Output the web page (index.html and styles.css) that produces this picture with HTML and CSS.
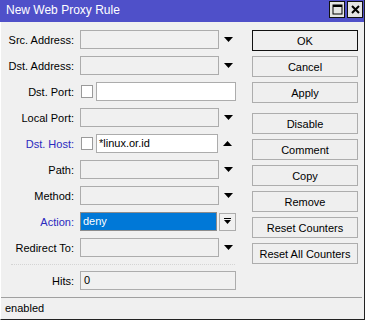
FILE: index.html
```html
<!DOCTYPE html>
<html lang="en">
<head>
    <meta charset="UTF-8">
    <title>New Web Proxy Rule</title>
    <link rel="stylesheet" href="styles.css">
</head>
<body>

    <div class="window">
        <div class="titlebar">
            <span class="title">New Web Proxy Rule</span>
            <div class="title-buttons">
                <span class="tbtn">
                    <svg width="11" height="11" viewBox="0 0 11 11"><rect x="1" y="1" width="9" height="9" fill="none" stroke="#000" stroke-width="1"/><rect x="1" y="1" width="9" height="2" fill="#000"/></svg>
                </span>
                <span class="tbtn">
                    <svg width="9" height="9" viewBox="0 0 9 9"><path d="M1 1 L8 8 M8 1 L1 8" stroke="#000" stroke-width="2"/></svg>
                </span>
            </div>
        </div>

        <div class="main">
            <div class="form">
                <div class="row">
                    <label class="lbl">Src. Address:</label>
                    <span class="field"></span>
                    <svg class="arrow" width="9" height="5" viewBox="0 0 9 5"><polygon points="0,0 9,0 4.5,5" fill="#000"/></svg>
                </div>
                <div class="row">
                    <label class="lbl">Dst. Address:</label>
                    <span class="field"></span>
                    <svg class="arrow" width="9" height="5" viewBox="0 0 9 5"><polygon points="0,0 9,0 4.5,5" fill="#000"/></svg>
                </div>
                <div class="row">
                    <label class="lbl">Dst. Port:</label>
                    <span class="check"></span>
                    <span class="field white port"></span>
                </div>
                <div class="row">
                    <label class="lbl">Local Port:</label>
                    <span class="field"></span>
                    <svg class="arrow" width="9" height="5" viewBox="0 0 9 5"><polygon points="0,0 9,0 4.5,5" fill="#000"/></svg>
                </div>
                <div class="row">
                    <label class="lbl blue">Dst. Host:</label>
                    <span class="check"></span>
                    <span class="field white host">*linux.or.id</span>
                    <svg class="arrow" width="9" height="5" viewBox="0 0 9 5"><polygon points="4.5,0 9,5 0,5" fill="#000"/></svg>
                </div>
                <div class="row">
                    <label class="lbl">Path:</label>
                    <span class="field"></span>
                    <svg class="arrow" width="9" height="5" viewBox="0 0 9 5"><polygon points="0,0 9,0 4.5,5" fill="#000"/></svg>
                </div>
                <div class="row">
                    <label class="lbl">Method:</label>
                    <span class="field"></span>
                    <svg class="arrow" width="9" height="5" viewBox="0 0 9 5"><polygon points="0,0 9,0 4.5,5" fill="#000"/></svg>
                </div>
                <div class="row">
                    <label class="lbl blue">Action:</label>
                    <span class="field selected">deny</span>
                    <span class="dropbtn">
                        <svg width="7" height="7" viewBox="0 0 7 7"><rect x="0" y="0" width="7" height="1" fill="#000"/><polygon points="0,2 7,2 3.5,6" fill="#000"/></svg>
                    </span>
                </div>
                <div class="row">
                    <label class="lbl">Redirect To:</label>
                    <span class="field"></span>
                    <svg class="arrow" width="9" height="5" viewBox="0 0 9 5"><polygon points="0,0 9,0 4.5,5" fill="#000"/></svg>
                </div>

                <div class="sep"></div>

                <div class="row">
                    <label class="lbl">Hits:</label>
                    <span class="field hits">0</span>
                </div>
            </div>

            <div class="buttons">
                <button class="btn default">OK</button>
                <button class="btn">Cancel</button>
                <button class="btn group-end">Apply</button>
                <button class="btn">Disable</button>
                <button class="btn">Comment</button>
                <button class="btn">Copy</button>
                <button class="btn">Remove</button>
                <button class="btn">Reset Counters</button>
                <button class="btn">Reset All Counters</button>
            </div>
        </div>

        <div class="status">enabled</div>
    </div>

</body>
</html>
```

FILE: styles.css
```css
body {
    margin: 0;
    background-color: #fff;
    font-family: "Liberation Sans", Arial, sans-serif;
    font-size: 11px;
    color: #000;
    overflow: hidden;
}
.window {
    width: 363px;
    height: 319px;
    background-color: #f0f0f0;
    border-left: 1px solid #fff;
    border-right: 1px solid #222;
    border-bottom: 1px solid #222;
    display: flex;
    flex-direction: column;
    box-sizing: content-box;
}
.titlebar {
    height: 22px;
    background-color: #4f50c9;
    display: flex;
    align-items: center;
    padding-left: 6px;
    margin-left: -1px;
}
.title {
    color: #fff;
    font-size: 12px;
    flex: 1;
    margin-top: -2px;
}
.title-buttons {
    display: flex;
    gap: 2px;
    margin-right: 1px;
    margin-top: -3px;
}
.tbtn {
    width: 14px;
    height: 15px;
    background-color: #e4e4e4;
    border: 1px solid #111;
    display: flex;
    align-items: center;
    justify-content: center;
}
.main {
    flex: 1;
    display: flex;
}
.form {
    width: 245px;
    padding-top: 8px;
}
.row {
    height: 19px;
    margin-bottom: 7px;
    display: flex;
    align-items: center;
}
.lbl {
    width: 73px;
    text-align: right;
    flex-shrink: 0;
}
.lbl.blue {
    color: #2a2abf;
}
.field {
    box-sizing: border-box;
    height: 19px;
    width: 139px;
    margin-left: 6px;
    border: 1px solid #acacac;
    background-color: #f0f0f0;
    padding-left: 2px;
    line-height: 17px;
}
.field.white {
    background-color: #fff;
}
.field.port {
    width: 140px;
    margin-left: 3px;
}
.field.host {
    width: 122px;
    margin-left: 3px;
}
.field.selected {
    width: 137px;
    background-color: #0078d7;
    color: #fff;
    border-color: #8c8c8c;
}
.field.hits {
    width: 156px;
    padding-left: 3px;
}
.check {
    box-sizing: border-box;
    width: 12px;
    height: 13px;
    margin-left: 7px;
    background-color: #fff;
    border: 1px solid #9a9a9a;
}
.arrow {
    margin-left: 5px;
}
.dropbtn {
    box-sizing: border-box;
    width: 17px;
    height: 18px;
    margin-left: 2px;
    border: 1px solid #acacac;
    background-color: #f0f0f0;
    display: flex;
    align-items: center;
    justify-content: center;
}
.sep {
    height: 0;
    margin: 1px 11px 6px 10px;
    border-top: 1px dotted #d4d4d4;
}
.buttons {
    padding-top: 8px;
    margin-left: 6px;
    display: flex;
    flex-direction: column;
}
.btn {
    width: 106px;
    height: 21px;
    margin-bottom: 5px;
    font-family: "Liberation Sans", Arial, sans-serif;
    font-size: 11px;
    color: #000;
    background-color: #efefef;
    border: 1px solid #adadad;
    padding: 0;
}
.btn.default {
    border-color: #111;
}
.btn.group-end {
    margin-bottom: 10px;
}
.status {
    height: 21px;
    border-top: 1px solid #a0a0a0;
    margin-right: 2px;
    padding-left: 4px;
    line-height: 21px;
}
```
